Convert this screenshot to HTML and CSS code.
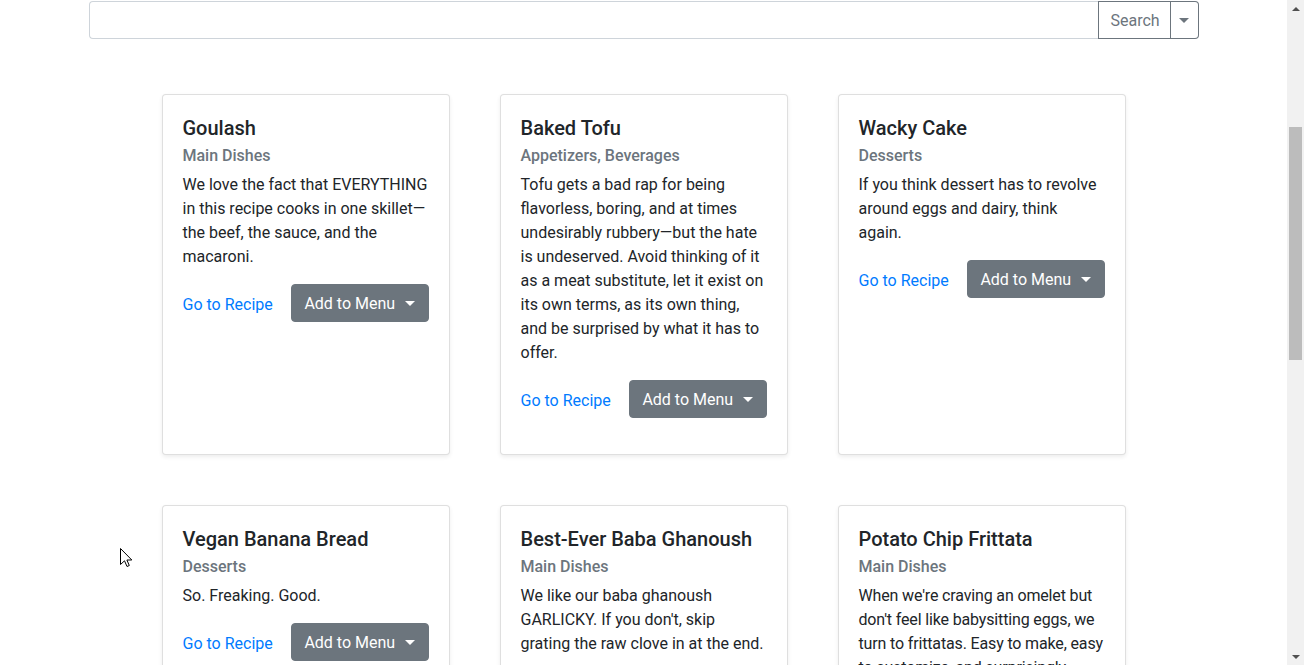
FILE: index.html
```html
<!DOCTYPE html>
<html lang="en">
<head>
<meta charset="utf-8">
<title>Recipes</title>
<link rel="stylesheet" href="styles.css">
</head>
<body>
<div class="page">
  <div class="container">
    <div class="input-group">
      <input class="search-input" type="text" aria-label="Search recipes">
      <button class="btn-outline search-btn" type="button">Search</button>
      <button class="btn-outline toggle-btn" type="button" aria-label="More"><span class="caret caret-grey"></span></button>
    </div>
  </div>

  <div class="cards">
    <div class="card">
      <h5 class="card-title">Goulash</h5>
      <h6 class="card-subtitle">Main Dishes</h6>
      <p class="card-text">We love the fact that EVERYTHING in this recipe cooks in one skillet—the beef, the sauce, and the macaroni.</p>
      <div class="actions"><a class="card-link" href="#">Go to Recipe</a><button class="btn-secondary" type="button">Add to Menu<span class="caret"></span></button></div>
    </div>
    <div class="card">
      <h5 class="card-title">Baked Tofu</h5>
      <h6 class="card-subtitle">Appetizers, Beverages</h6>
      <p class="card-text">Tofu gets a bad rap for being flavorless, boring, and at times undesirably rubbery—but the hate is undeserved. Avoid thinking of it as a meat substitute, let it exist on its own terms, as its own thing, and be surprised by what it has to offer.</p>
      <div class="actions"><a class="card-link" href="#">Go to Recipe</a><button class="btn-secondary" type="button">Add to Menu<span class="caret"></span></button></div>
    </div>
    <div class="card">
      <h5 class="card-title">Wacky Cake</h5>
      <h6 class="card-subtitle">Desserts</h6>
      <p class="card-text">If you think dessert has to revolve around eggs and dairy, think again.</p>
      <div class="actions"><a class="card-link" href="#">Go to Recipe</a><button class="btn-secondary" type="button">Add to Menu<span class="caret"></span></button></div>
    </div>
    <div class="card">
      <h5 class="card-title">Vegan Banana Bread</h5>
      <h6 class="card-subtitle">Desserts</h6>
      <p class="card-text">So. Freaking. Good.</p>
      <div class="actions"><a class="card-link" href="#">Go to Recipe</a><button class="btn-secondary" type="button">Add to Menu<span class="caret"></span></button></div>
    </div>
    <div class="card">
      <h5 class="card-title">Best-Ever Baba Ghanoush</h5>
      <h6 class="card-subtitle">Main Dishes</h6>
      <p class="card-text">We like our baba ghanoush GARLICKY. If you don't, skip grating the raw clove in at the end.</p>
      <div class="actions"><a class="card-link" href="#">Go to Recipe</a><button class="btn-secondary" type="button">Add to Menu<span class="caret"></span></button></div>
    </div>
    <div class="card">
      <h5 class="card-title">Potato Chip Frittata</h5>
      <h6 class="card-subtitle">Main Dishes</h6>
      <p class="card-text card-text-tight">When we're craving an omelet but don't feel like babysitting eggs, we turn to frittatas. Easy to make, easy to customize, and surprisingly forgiving.</p>
      <div class="actions"><a class="card-link" href="#">Go to Recipe</a><button class="btn-secondary" type="button">Add to Menu<span class="caret"></span></button></div>
    </div>
  </div>
</div>

<svg class="cursor" width="13" height="20" viewBox="0 0 13 20" aria-hidden="true">
  <path d="M0.5 0.5 L0.5 16.5 L4.5 12.8 L7 18.5 L9.3 17.5 L6.9 12 L11.8 12 Z" fill="#fff" stroke="#000" stroke-width="1" stroke-linejoin="miter"/>
</svg>

<div class="scrollbar" aria-hidden="true">
  <div class="arrow arrow-up"></div>
  <div class="track"><div class="thumb"></div></div>
  <div class="arrow arrow-down"></div>
</div>
</body>
</html>
```

FILE: styles.css
```css
html, body {
  margin: 0;
  padding: 0;
  overflow: hidden;
  height: 665px;
  background: #fff;
}

body {
  font-family: Roboto, "Noto Sans", sans-serif;
  font-size: 16px;
  line-height: 1.5;
  color: #212529;
}

.page {
  width: 1287px;
}

.container {
  width: 1110px;
  margin: 0 auto;
  padding-top: 1px;
}

.input-group {
  display: flex;
  height: 38px;
}

.search-input {
  flex: 1;
  box-sizing: border-box;
  height: 38px;
  margin: 0;
  border: 1px solid #ced4da;
  border-right: none;
  border-radius: 4px 0 0 4px;
  padding: 6px 12px;
  font: inherit;
  outline: none;
}

.btn-outline {
  box-sizing: border-box;
  height: 38px;
  margin: 0;
  border: 1px solid #6c757d;
  background: #fff;
  color: #6c757d;
  font: inherit;
  font-size: 16px;
  padding: 7px 12px 5px;
  cursor: pointer;
}

.search-btn {
  width: 73px;
  border-radius: 0;
}

.toggle-btn {
  width: 28px;
  border-left: none;
  border-radius: 0 4px 4px 0;
  padding: 0;
  display: flex;
  align-items: center;
  justify-content: center;
}

.caret {
  display: inline-block;
  width: 0;
  height: 0;
  margin-left: 10px;
  border-top: 5px solid #fff;
  border-left: 5px solid transparent;
  border-right: 5px solid transparent;
  vertical-align: 3px;
}

.caret-grey {
  margin-left: 0;
  border-top-color: #6c757d;
  vertical-align: middle;
}

.cards {
  width: 964px;
  margin: 55px auto 0;
  display: flex;
  flex-wrap: wrap;
  column-gap: 50px;
  row-gap: 50px;
}

.card {
  box-sizing: border-box;
  width: 288px;
  height: 361px;
  border: 1px solid rgba(0, 0, 0, 0.125);
  border-radius: 4px;
  box-shadow: 0 2px 4px rgba(0, 0, 0, 0.075);
  padding: 21px 20px 20px;
  background: #fff;
}

.card-title {
  margin: 0 0 12px;
  font-size: 20px;
  font-weight: 500;
  line-height: 1.2;
}

.card-subtitle {
  margin: -6px 0 8px;
  font-size: 16px;
  font-weight: 500;
  line-height: 1.2;
  color: #6c757d;
}

.card-text {
  margin: 0 0 15px;
}

.card-text-tight {
  letter-spacing: -0.15px;
}

.actions {
  display: flex;
  align-items: center;
  gap: 18px;
}

.card-link {
  color: #007bff;
  text-decoration: none;
  white-space: nowrap;
  flex-shrink: 0;
  padding-top: 4px;
}

.btn-secondary {
  box-sizing: border-box;
  flex-shrink: 0;
  height: 38px;
  width: 138px;
  margin: 0;
  border: 1px solid #6c757d;
  border-radius: 4px;
  background: #6c757d;
  color: #fff;
  font: inherit;
  font-size: 16px;
  padding: 7px 12px 5px;
  white-space: nowrap;
  cursor: pointer;
}

.cursor {
  position: fixed;
  left: 120px;
  top: 548px;
}

.scrollbar {
  position: fixed;
  top: 0;
  right: 0;
  width: 17px;
  height: 665px;
  background: #f1f1f1;
  display: flex;
  flex-direction: column;
}

.arrow {
  height: 17px;
  display: flex;
  align-items: center;
  justify-content: center;
}

.arrow::before {
  content: "";
  width: 0;
  height: 0;
  border-left: 4px solid transparent;
  border-right: 4px solid transparent;
}

.arrow-up::before {
  border-bottom: 4px solid #505050;
}

.arrow-down::before {
  border-top: 4px solid #505050;
}

.track {
  flex: 1;
  position: relative;
}

.thumb {
  position: absolute;
  left: 2px;
  right: 2px;
  top: 110px;
  height: 233px;
  background: #bcbcbc;
}
```
